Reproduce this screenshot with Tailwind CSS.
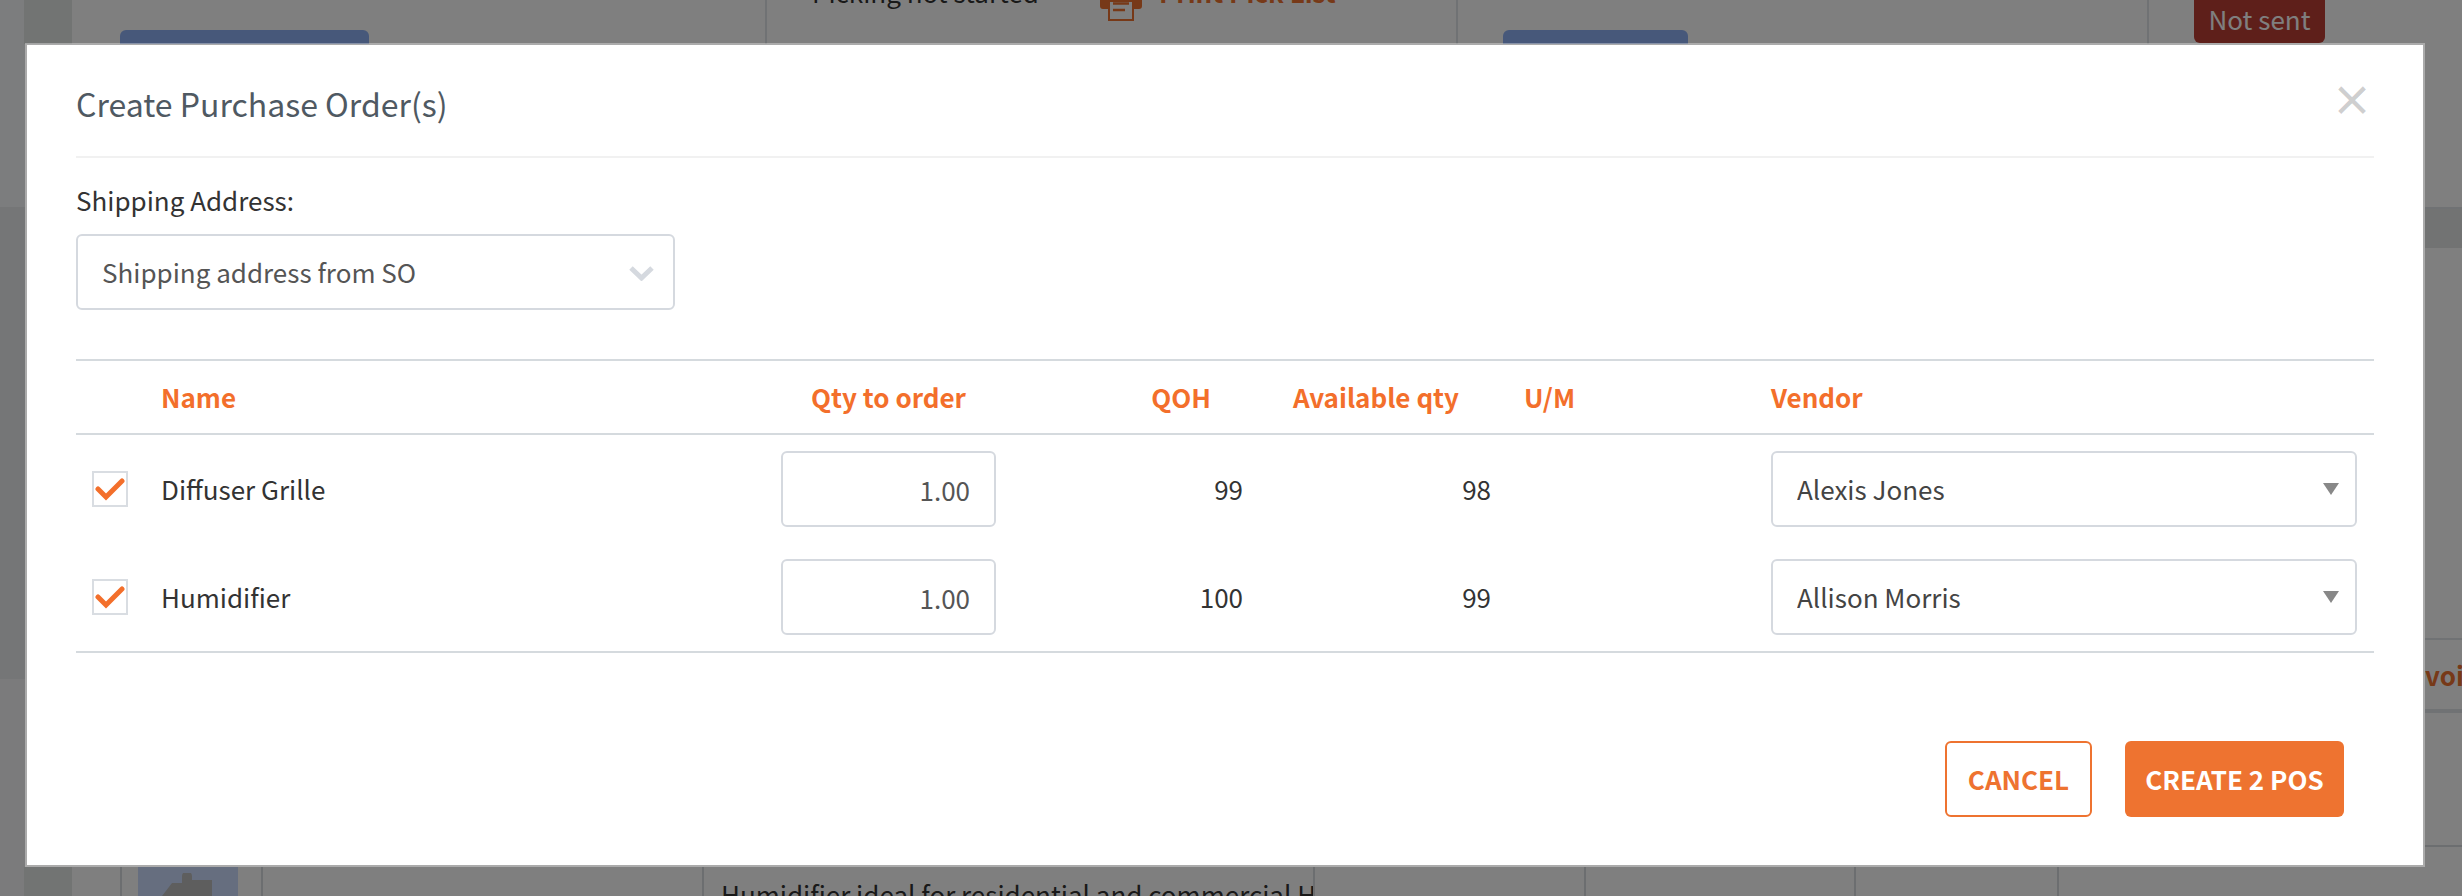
<!DOCTYPE html>
<html lang="en">
<head>
  <meta charset="UTF-8" />
  <title>Create Purchase Order(s)</title>
  <script src="https://cdn.jsdelivr.net/npm/@tailwindcss/browser@4"></script>
</head>
<body class="relative h-[896px] w-[2462px] overflow-hidden bg-white font-['Noto_Sans_CJK_JP','Source_Sans_Pro',sans-serif] text-[26px] leading-[36px] text-[#333]">

  <!-- page behind the dialog -->
  <div class="flex h-[896px] flex-col">
    <div class="flex h-[44px] overflow-hidden">
      <div class="w-[24px] bg-[#f8fafc]"></div>
      <div class="w-[48px] bg-[#e4e8e6]"></div>
      <div class="w-[693px] pl-[48px] pt-[30px]">
        <div class="h-[30px] w-[249px] rounded-[6px] bg-[#8eb0f4]"></div>
      </div>
      <div class="flex w-[691px] border-l-2 border-[#e0e4e8] pl-[45px]">
        <span class="-mt-[26px] w-[288px] text-[#333]">Picking not started</span>
        <svg class="w-[42px] shrink-0" height="22" viewBox="0 0 42 22">
          <path d="M0 0H42V6a3 3 0 0 1-3 3H34V8H8v1H3a3 3 0 0 1-3-3Z" fill="#ee7330"/>
          <path d="M9 1H33V20H9Z" fill="#fff" stroke="#ee7330" stroke-width="2"/>
          <path d="M13 3.500H29M13 10H25" stroke="#ee7330" stroke-width="2.500"/>
        </svg>
        <span class="-mt-[26px] ml-[17px] font-bold text-[#ee7330]">Print Pick List</span>
      </div>
      <div class="w-[691px] border-l-2 border-[#e0e4e8] pl-[45px] pt-[30px]">
        <div class="h-[30px] w-[185px] rounded-[6px] bg-[#8eb0f4]"></div>
      </div>
      <div class="flex-1 border-l-2 border-[#e0e4e8] pl-[45px]">
        <div class="flex h-[43px] w-[131px] items-center justify-center rounded-b-[6px] bg-[#bc3e34] pb-[6px] text-white">Not sent</div>
      </div>
    </div>

    <div class="flex h-[823px] justify-between">
      <div class="flex w-[25px] flex-col">
        <div class="h-[163px] bg-[#f8fafc]"></div>
        <div class="h-[472px] bg-[#eaecee]"></div>
        <div class="flex-1 bg-[#f6f7f8]"></div>
      </div>
      <div class="flex w-[37px] flex-col">
        <div class="h-[163px]"></div>
        <div class="h-[41px] border-t-2 border-[#e0e4e8] bg-[#e4e7e6]"></div>
        <div class="h-[390px]"></div>
        <div class="flex h-[75px] items-center overflow-hidden border-b-4 border-t-2 border-[#e0e4e8] font-bold whitespace-nowrap text-[#ee7330]">voice</div>
        <div class="h-[134px] border-b-2 border-[#d8dce0]"></div>
      </div>
    </div>

    <div class="flex h-[29px] overflow-hidden">
      <div class="w-[24px] bg-[#f6f7f8]"></div>
      <div class="w-[48px] bg-[#e4e8e6]"></div>
      <div class="w-[48px]"></div>
      <div class="w-[18px] border-l-2 border-[#d8dce0]"></div>
      <div class="flex w-[100px] justify-center bg-[#ccddff] pt-[6px]">
        <svg width="52" height="23" viewBox="0 0 52 23"><path d="M0 23 10 10H20V3a4 4 0 0 1 10 0V7H50V23Z" fill="#bdbdbd"/></svg>
      </div>
      <div class="w-[23px]"></div>
      <div class="w-[441px] border-l-2 border-[#d8dce0]"></div>
      <div class="w-[611px] border-l-2 border-[#d8dce0] pl-[17px] pt-[9px] whitespace-nowrap">Humidifier ideal for residential and commercial H</div>
      <div class="w-[271px] border-l-2 border-[#d8dce0]"></div>
      <div class="w-[270px] border-l-2 border-[#d8dce0]"></div>
      <div class="w-[203px] border-l-2 border-[#d8dce0]"></div>
      <div class="flex-1 border-l-2 border-[#d8dce0]"></div>
    </div>
  </div>

  <!-- backdrop -->
  <div class="absolute inset-0 bg-black/50"></div>

  <!-- dialog -->
  <div class="absolute left-[25px] top-[43px] h-[824px] w-[2400px] border-2 border-white/35 bg-white bg-clip-padding px-[49px]">
    <button class="absolute right-[50px] top-[30px] text-[42px] font-bold leading-[46px] text-black/20">×</button>

    <div class="flex h-[113px] items-center border-b-2 border-[#f1f1f1] pt-[4px]">
      <h1 class="text-[32px] font-normal text-[#4f5962]">Create Purchase Order(s)</h1>
    </div>

    <label class="mt-[24px] block h-[36px] text-[#333]">Shipping Address:</label>
    <div class="relative mt-[16px] w-[599px]">
      <select class="h-[76px] w-full appearance-none rounded-[6px] border-2 border-[#d5d9df] bg-white pl-[24px] text-[#555]">
        <option>Shipping address from SO</option>
      </select>
      <svg class="absolute right-[21px] top-[32px]" width="25" height="15" viewBox="0 0 25 15"><path d="M2 2l10.500 10L23 2" fill="none" stroke="#d5d9df" stroke-width="5"/></svg>
    </div>

    <div class="mt-[49px] border-y-2 border-[#d5dade]">
      <div class="grid h-[74px] grid-cols-[85px_620px_215px_247px_248px_280px_602px] items-center border-b-2 border-[#d5dade] font-bold text-[#f36f2b]">
        <div></div>
        <div>Name</div>
        <div class="text-center">Qty to order</div>
        <div class="pr-[32px] text-right">QOH</div>
        <div class="pr-[32px] text-right">Available qty</div>
        <div class="pl-[33px]">U/M</div>
        <div>Vendor</div>
      </div>

      <div class="grid h-[108px] grid-cols-[85px_620px_215px_247px_248px_280px_602px] items-center">
        <div class="pl-[16px]">
          <div class="flex h-[36px] w-[36px] items-center justify-center border-2 border-[#d9dde2]">
            <svg width="30" height="24" viewBox="0 0 30 24"><path d="M3 12l8 8L27 4" fill="none" stroke="#f36f2b" stroke-width="5" stroke-linecap="round"/></svg>
          </div>
        </div>
        <div>Diffuser Grille</div>
        <input readonly value="1.00" class="h-[76px] w-[215px] rounded-[6px] border-2 border-[#d5d9df] pr-[24px] text-right text-[#555]" />
        <div class="text-right">99</div>
        <div class="text-right">98</div>
        <div></div>
        <div class="relative w-[586px]">
          <select class="h-[76px] w-full appearance-none rounded-[6px] border-2 border-[#d5d9df] bg-white pl-[24px] text-[#444]">
            <option>Alexis Jones</option>
          </select>
          <svg class="absolute right-[18px] top-[32px]" width="16" height="12" viewBox="0 0 16 12"><path d="M0 0H16L8 12Z" fill="#888"/></svg>
        </div>
      </div>

      <div class="grid h-[108px] grid-cols-[85px_620px_215px_247px_248px_280px_602px] items-center">
        <div class="pl-[16px]">
          <div class="flex h-[36px] w-[36px] items-center justify-center border-2 border-[#d9dde2]">
            <svg width="30" height="24" viewBox="0 0 30 24"><path d="M3 12l8 8L27 4" fill="none" stroke="#f36f2b" stroke-width="5" stroke-linecap="round"/></svg>
          </div>
        </div>
        <div>Humidifier</div>
        <input readonly value="1.00" class="h-[76px] w-[215px] rounded-[6px] border-2 border-[#d5d9df] pr-[24px] text-right text-[#555]" />
        <div class="text-right">100</div>
        <div class="text-right">99</div>
        <div></div>
        <div class="relative w-[586px]">
          <select class="h-[76px] w-full appearance-none rounded-[6px] border-2 border-[#d5d9df] bg-white pl-[24px] text-[#444]">
            <option>Allison Morris</option>
          </select>
          <svg class="absolute right-[18px] top-[32px]" width="16" height="12" viewBox="0 0 16 12"><path d="M0 0H16L8 12Z" fill="#888"/></svg>
        </div>
      </div>
    </div>

    <div class="mt-[88px] flex justify-end gap-[33px] pr-[30px]">
      <button class="h-[76px] w-[147px] rounded-[6px] border-2 border-[#ee7330] bg-white font-semibold text-[#ee7330]">CANCEL</button>
      <button class="h-[76px] w-[219px] rounded-[6px] bg-[#ee7330] font-semibold text-white">CREATE 2 POS</button>
    </div>
  </div>
</body>
</html>
